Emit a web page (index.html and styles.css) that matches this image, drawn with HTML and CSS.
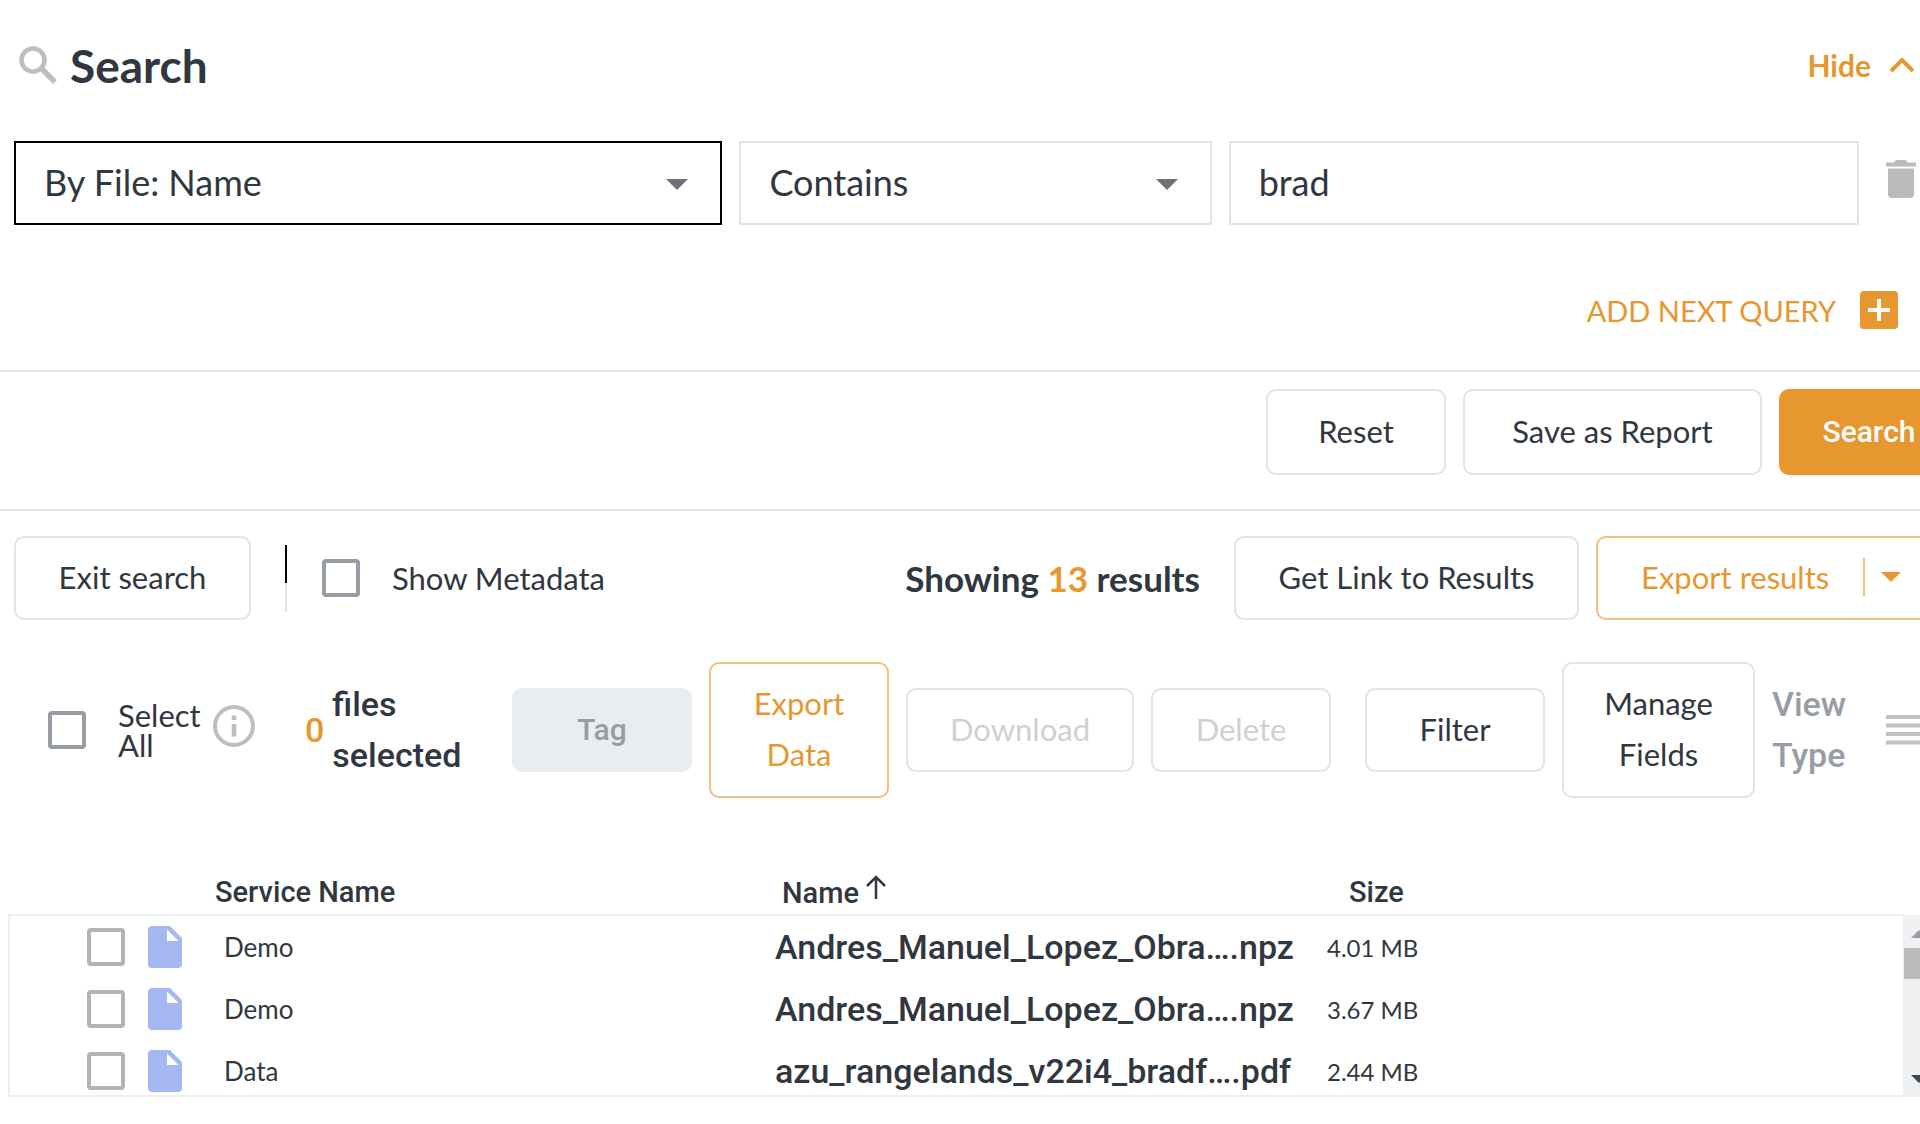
FILE: index.html
```html
<!DOCTYPE html>
<html lang="en">
<head>
    <meta charset="UTF-8">
    <meta name="viewport" content="width=device-width, initial-scale=1.0">
    <title>Search</title>
    <link rel="stylesheet" href="styles.css">
</head>
<body>
    <header class="search-header">
        <svg class="search-icon" viewBox="0 0 38 38" aria-hidden="true">
            <circle cx="14" cy="14" r="11.5" fill="none" stroke="#bdbec0" stroke-width="4.5"/>
            <path d="M22 22L36 36" stroke="#bdbec0" stroke-width="5.5"/>
        </svg>
        <h1>Search</h1>
        <button class="hide-button" type="button">
            Hide
            <svg width="26" height="18" viewBox="0 0 26 18" aria-hidden="true">
                <path d="M2 15L13 4L24 15" fill="none" stroke="#e7972f" stroke-width="4"/>
            </svg>
        </button>
    </header>

    <form class="query-row">
        <div class="select-box active">
            <select aria-label="Search by">
                <option>By File: Name</option>
            </select>
        </div>
        <div class="select-box">
            <select aria-label="Condition">
                <option>Contains</option>
            </select>
        </div>
        <input class="query-text" type="text" aria-label="Search value" value="brad">
        <button class="trash" type="button" aria-label="Delete query">
            <svg width="30" height="38" viewBox="0 0 30 38" aria-hidden="true">
                <path d="M0 2.5H8L10 0H20L22 2.5H30V6.5H0ZM2 8.5H28V34Q28 38 24 38H6Q2 38 2 34Z" fill="#b9bbbd"/>
            </svg>
        </button>
    </form>

    <div class="add-query">
        <button class="add-button" type="button">
            ADD NEXT QUERY
            <svg width="38" height="38" viewBox="0 0 38 38" aria-hidden="true">
                <rect width="38" height="38" rx="4" fill="#e7972f"/>
                <path d="M19 8V30M8 19H30" stroke="#fff" stroke-width="4"/>
            </svg>
        </button>
    </div>

    <div class="form-actions">
        <button class="button reset" type="button">Reset</button>
        <button class="button save" type="button">Save as Report</button>
        <button class="button primary" type="submit">Search</button>
    </div>

    <div class="result-bar">
        <button class="button exit" type="button">Exit search</button>
        <span class="divider"></span>
        <label class="metadata"><input type="checkbox">Show Metadata</label>
        <p class="result-count">Showing <span class="accent">13</span> results</p>
        <button class="button link" type="button">Get Link to Results</button>
        <button class="button outline export-results" type="button">
            Export results
            <span class="export-arrow"></span>
        </button>
    </div>

    <div class="toolbar">
        <label class="select-all"><input type="checkbox"><span>Select All</span></label>
        <svg class="info-icon" viewBox="0 0 42 42" aria-hidden="true">
            <circle cx="21" cy="21" r="19" fill="none" stroke="#bdbec0" stroke-width="4"/>
            <path d="M21 10.5V15M21 19V31.5" stroke="#bdbec0" stroke-width="4.5"/>
        </svg>
        <p class="selected-count"><span class="accent">0</span> <span class="files">files selected</span></p>
        <button class="button tag" type="button" disabled>Tag</button>
        <button class="button outline export-data" type="button">Export Data</button>
        <button class="button download" type="button" disabled>Download</button>
        <button class="button delete" type="button" disabled>Delete</button>
        <button class="button filter" type="button">Filter</button>
        <button class="button manage" type="button">Manage Fields</button>
        <span class="view-type">View Type</span>
        <button type="button" aria-label="List view">
            <svg width="42" height="30" viewBox="0 0 42 30" aria-hidden="true">
                <path d="M0 2H42M0 10.5H42M0 19H42M0 27.5H42" stroke="#bfc2c5" stroke-width="4"/>
            </svg>
        </button>
    </div>

    <div class="results">
        <table>
            <colgroup>
                <col class="col-icons">
                <col class="col-service">
                <col class="col-name">
                <col>
            </colgroup>
            <thead>
                <tr>
                    <th></th>
                    <th>Service Name</th>
                    <th class="name-head">Name<svg width="22" height="24" viewBox="0 0 22 24" aria-hidden="true"><path d="M11 24V2M2 11L11 2L20 11" fill="none" stroke="#303740" stroke-width="2.5"/></svg></th>
                    <th class="size-head">Size</th>
                </tr>
            </thead>
            <tbody>
                <tr>
                    <td class="icons"><input type="checkbox" aria-label="Select file"><svg class="file-icon" viewBox="0 0 34 42" aria-hidden="true"><path fill-rule="evenodd" d="M4 0H22L34 12V38Q34 42 30 42H4Q0 42 0 38V4Q0 0 4 0ZM19 3.5V15H30.5Z" fill="#a5b8f2"/></svg></td>
                    <td>Demo</td>
                    <td class="file-name"><a href="#">Andres_Manuel_Lopez_Obra….npz</a></td>
                    <td class="size">4.01 MB</td>
                </tr>
                <tr>
                    <td class="icons"><input type="checkbox" aria-label="Select file"><svg class="file-icon" viewBox="0 0 34 42" aria-hidden="true"><path fill-rule="evenodd" d="M4 0H22L34 12V38Q34 42 30 42H4Q0 42 0 38V4Q0 0 4 0ZM19 3.5V15H30.5Z" fill="#a5b8f2"/></svg></td>
                    <td>Demo</td>
                    <td class="file-name"><a href="#">Andres_Manuel_Lopez_Obra….npz</a></td>
                    <td class="size">3.67 MB</td>
                </tr>
                <tr>
                    <td class="icons"><input type="checkbox" aria-label="Select file"><svg class="file-icon" viewBox="0 0 34 42" aria-hidden="true"><path fill-rule="evenodd" d="M4 0H22L34 12V38Q34 42 30 42H4Q0 42 0 38V4Q0 0 4 0ZM19 3.5V15H30.5Z" fill="#a5b8f2"/></svg></td>
                    <td>Data</td>
                    <td class="file-name"><a href="#">azu_rangelands_v22i4_bradf….pdf</a></td>
                    <td class="size">2.44 MB</td>
                </tr>
            </tbody>
        </table>
        <div class="scrollbar">
            <span class="arrow-up"></span>
            <span class="thumb"></span>
            <span class="arrow-down"></span>
        </div>
    </div>
</body>
</html>
```
FILE: styles.css
```css
* {
    box-sizing: border-box;
}

body {
    margin: 0;
    overflow-x: hidden;
    font-family: Lato, sans-serif;
    font-size: 31px;
    color: #303740;
    background: #fff;
}

h1,
p {
    margin: 0;
}

button,
input,
select {
    font: inherit;
    color: inherit;
    margin: 0;
}

button {
    background: none;
    border: none;
    padding: 0;
    white-space: nowrap;
    cursor: pointer;
}

svg {
    display: block;
    flex: none;
}

.accent {
    color: #e7972f;
}

/* header */
.search-header {
    display: flex;
    align-items: center;
    height: 130px;
    padding: 0 5px 0 19px;
}

.search-icon {
    width: 38px;
    height: 38px;
    margin-right: 13px;
}

h1 {
    font-size: 46px;
    font-weight: bold;
}

.hide-button {
    display: flex;
    align-items: center;
    gap: 18px;
    margin-left: auto;
    font-size: 30px;
    font-weight: bold;
    color: #e7972f;
}

/* query */
.query-row {
    display: grid;
    grid-template-columns: 708fr 472fr 630fr 40px;
    gap: 17px;
    align-items: center;
    padding: 11px 4px 0 14px;
}

.select-box {
    position: relative;
}

.select-box::after {
    content: "";
    position: absolute;
    right: 34px;
    top: 38px;
    border: 11px solid transparent;
    border-top-color: #6d7278;
    border-bottom: none;
    pointer-events: none;
}

.select-box select,
.query-text {
    display: block;
    width: 100%;
    height: 84px;
    padding: 0 28px 2px;
    font-size: 36px;
    background: #fff;
    border: 2px solid #dfe4e8;
    border-radius: 0;
    outline: none;
    appearance: none;
}

.select-box.active select {
    border-color: #000;
}

.trash {
    justify-self: end;
    padding-bottom: 8px;
}

.add-query {
    display: flex;
    justify-content: flex-end;
    padding: 66px 22px 41px;
    border-bottom: 2px solid #dfe4e8;
}

.add-button {
    display: flex;
    align-items: center;
    gap: 24px;
    font-size: 29px;
    color: #e7972f;
}

/* buttons */
.button {
    flex: none;
    min-height: 84px;
    padding-bottom: 2px;
    border: 2px solid #dfe4e8;
    border-radius: 10px;
    line-height: 51px;
    text-align: center;
}

.button.outline {
    color: #e7972f;
    border-color: #f3bf7c;
}

.button.primary {
    font-family: Roboto, sans-serif;
    font-size: 30px;
    font-weight: 500;
    color: #fff;
    background: #e7972f;
    border-color: #e7972f;
}

.button:disabled {
    color: #cdd1d5;
}

.form-actions {
    display: flex;
    justify-content: flex-end;
    gap: 17px;
    padding: 17px 0 34px;
    margin-right: -39px;
}

.form-actions .button {
    min-height: 86px;
}

.reset,
.primary {
    width: 180px;
}

.save {
    width: 299px;
}

/* result bar */
.result-bar {
    display: flex;
    align-items: center;
    padding: 25px 0 0 14px;
    margin-right: -16px;
    border-top: 2px solid #dfe4e8;
}

.exit {
    width: 237px;
}

.divider {
    width: 2px;
    height: 67px;
    margin: 0 35px 0 34px;
    background: linear-gradient(#000 38px, #dfe4e8 38px);
}

.metadata {
    display: flex;
    align-items: center;
    gap: 32px;
}

input[type="checkbox"] {
    flex: none;
    width: 38px;
    height: 38px;
    border: 4px solid #979da4;
    border-radius: 4px;
    background: #fff;
    appearance: none;
}

.result-count {
    margin: 0 34px 0 auto;
    font-size: 35px;
    font-weight: bold;
}

.link {
    width: 345px;
    margin-right: 17px;
}

.export-results {
    display: flex;
    align-items: center;
    width: 340px;
    padding-left: 43px;
}

.export-arrow {
    display: flex;
    align-items: center;
    height: 38px;
    margin-left: auto;
    margin-right: 33px;
    padding-left: 16px;
    border-left: 2px solid #f3bf7c;
}

.export-arrow::after {
    content: "";
    border: 10px solid transparent;
    border-top-color: #e7972f;
    border-bottom: none;
}

/* toolbar */
.toolbar {
    display: flex;
    align-items: center;
    gap: 17px;
    padding: 42px 0 0 48px;
    margin-right: -8px;
}

.toolbar .button {
    width: 180px;
}

.select-all {
    display: flex;
    align-items: center;
    gap: 32px;
    width: 148px;
    line-height: 30px;
}

.info-icon {
    width: 42px;
    height: 42px;
    margin-bottom: 8px;
}

.selected-count {
    display: flex;
    align-items: center;
    gap: 8px;
    width: 190px;
    margin-left: 33px;
    font-family: Roboto, sans-serif;
    font-size: 34px;
    font-weight: 500;
    line-height: 51px;
}

.files {
    width: 130px;
}

.toolbar .tag {
    font-family: Roboto, sans-serif;
    font-size: 30px;
    font-weight: 500;
    color: #979da4;
    background: #e9edf0;
    border-color: #e9edf0;
}

.toolbar .export-data,
.toolbar .manage {
    height: 136px;
    padding: 0 36px 2px;
    white-space: normal;
}

.toolbar .download {
    width: 228px;
}

.toolbar .filter {
    margin-left: 17px;
}

.toolbar .manage {
    width: 193px;
}

.view-type {
    width: 76px;
    margin-right: 21px;
    font-family: Roboto, sans-serif;
    font-size: 34px;
    font-weight: 500;
    line-height: 51px;
    color: #979da4;
}

/* results table */
.results {
    display: flex;
    padding: 67px 0 26px 8px;
}

table {
    flex: 1;
    table-layout: fixed;
    border-collapse: collapse;
}

.col-icons {
    width: 206px;
}

.col-service {
    width: 560px;
}

.col-name {
    width: 552px;
}

th {
    height: 50px;
    padding: 5px 0 0;
    font-family: Roboto, sans-serif;
    font-size: 29px;
    font-weight: 500;
    text-align: left;
}

.name-head {
    padding-left: 7px;
}

.name-head svg {
    display: inline-block;
    margin-left: 6px;
    vertical-align: 4px;
}

.size-head {
    padding-left: 22px;
}

tbody {
    border: 2px solid #eceff1;
    border-right: none;
}

td {
    height: 62px;
    padding: 0;
    font-size: 26px;
}

tr:last-child td {
    height: 55px;
    padding-top: 7px;
}

td:nth-child(2) {
    padding-left: 9px;
}

td.icons {
    display: flex;
    align-items: center;
    gap: 23px;
    padding-left: 77px;
}

td.icons input {
    border-color: #b1b3b5;
}

.file-icon {
    width: 34px;
    height: 42px;
}

.file-name a {
    display: block;
    font-family: Roboto, sans-serif;
    font-size: 34px;
    font-weight: 500;
    line-height: 40px;
    color: inherit;
    text-decoration: none;
}

td.size {
    font-size: 24px;
}

.scrollbar {
    display: flex;
    flex-direction: column;
    align-items: center;
    width: 32px;
    margin: 50px -15px 0 0;
    padding: 15px 0 14px;
    background: #eff0f2;
}

.arrow-up,
.arrow-down {
    border: 8px solid transparent;
}

.arrow-up {
    border-bottom-color: #9b9fa4;
    border-top: none;
}

.arrow-down {
    margin-top: auto;
    border-top-color: #42484f;
    border-bottom: none;
}

.thumb {
    width: 30px;
    height: 31px;
    margin-top: 10px;
    background: #bbbcbe;
}
```
